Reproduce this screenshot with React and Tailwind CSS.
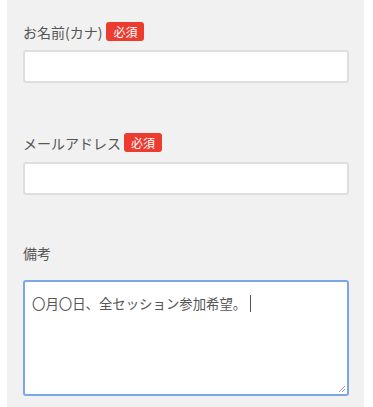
export default function App() {
  const font = { fontFamily: '"Noto Sans CJK JP", "Noto Sans", sans-serif' }

  return (
    <div className="w-[373px] h-[407px] bg-white pl-[7px] pr-[9px] overflow-hidden" style={font}>
      <div className="h-full bg-[#f1f1f1] pl-4 pr-[15px] pt-[22px] text-[#555]">
        {/* お名前(カナ) */}
        <div className="flex items-center h-[19px] gap-[4px]">
          <span className="text-[14px] leading-none">お名前(カナ)</span>
          <span className="h-[19px] px-[7px] rounded-[3px] bg-[#ec3b2f] text-white text-[12px] leading-[19px]">必須</span>
        </div>
        <div className="mt-[9px] h-[33px] bg-white border-2 border-[#dedede] rounded-[3px]"></div>

        {/* メールアドレス */}
        <div className="mt-[50px] flex items-center h-[19px] gap-[3px]">
          <span className="text-[14px] leading-none">メールアドレス</span>
          <span className="h-[19px] px-[7px] rounded-[3px] bg-[#ec3b2f] text-white text-[12px] leading-[19px]">必須</span>
        </div>
        <div className="mt-[10px] h-[33px] bg-white border-2 border-[#dedede] rounded-[3px]"></div>

        {/* 備考 */}
        <div className="mt-[48px] flex items-center h-[19px]">
          <span className="text-[14px] leading-none">備考</span>
        </div>
        <div className="relative mt-[18px] h-[116px] bg-white border-2 border-[#7ba6e8] rounded-[3px] pl-[7px] pt-[11px]">
          <div className="flex items-center text-[13.4px] leading-[20px] text-[#555]">
            <span>〇月〇日、全セッション参加希望。</span>
            <span className="ml-[4px] w-px h-[17px] bg-[#555]"></span>
          </div>
          {/* resize grip */}
          <svg className="absolute right-[1px] bottom-[1px]" width="9" height="9" viewBox="0 0 9 9">
            <path d="M8 2 L2 8 M8 5 L5 8" stroke="#999" strokeWidth="1" fill="none" />
          </svg>
        </div>
      </div>
    </div>
  )
}
